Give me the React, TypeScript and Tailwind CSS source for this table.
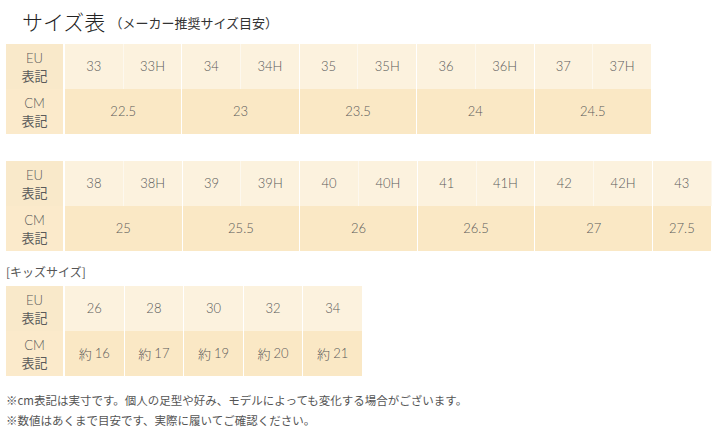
import React from "react";

const jp = { fontFamily: '"Noto Sans CJK JP", sans-serif' };
const num = { fontFamily: 'Lato, "Noto Sans CJK JP", sans-serif' };

function Label({ a, dark }: { a: string; dark?: boolean }) {
  return (
    <div
      className={`w-[59px] shrink-0 h-[45px] flex flex-col items-center justify-center text-[13px] leading-[18px] text-[#5a5a5a] border-r-2 border-white ${dark ? "bg-[#fbeacb]" : "bg-[#f9e9ca]"}`}
      style={num}
    >
      <span className="font-light">{a}</span>
      <span style={jp}>表記</span>
    </div>
  );
}

function SizeTable({ eu, cm, w }: { eu: string[]; cm: { v: string; span: number }[]; w: number }) {
  return (
    <div className="flex flex-col">
      <div className="flex">
        <Label a="EU" />
        {eu.map((e, i) => (
          <div
            key={e}
            className={`h-[45px] flex items-center justify-center text-[13px] font-light text-[#5a5a5a] bg-[#fcf2de] ${i % 2 === 0 ? "border-r border-[#fdf8ee]" : "border-r border-white"}`}
            style={{ ...num, width: w }}
          >
            {e}
          </div>
        ))}
      </div>
      <div className="flex">
        <Label a="CM" dark />
        {cm.map((c) => (
          <div
            key={c.v}
            className="h-[45px] flex items-center justify-center text-[13px] font-light text-[#5a5a5a] bg-[#fae8c5] border-r border-white"
            style={{ ...num, width: w * c.span }}
          >
            {c.v}
          </div>
        ))}
      </div>
    </div>
  );
}

function KidsTable() {
  const eu = ["26", "28", "30", "32", "34"];
  const cm = ["16", "17", "19", "20", "21"];
  return (
    <div className="flex flex-col">
      <div className="flex">
        <Label a="EU" />
        {eu.map((e) => (
          <div key={e} className="w-[59.6px] h-[45px] flex items-center justify-center text-[13px] font-light text-[#5a5a5a] bg-[#fcf2de] border-r border-white" style={num}>
            {e}
          </div>
        ))}
      </div>
      <div className="flex">
        <Label a="CM" dark />
        {cm.map((c) => (
          <div key={c} className="w-[59.6px] h-[45px] flex items-center justify-center text-[13px] font-light text-[#5a5a5a] bg-[#fae8c5] border-r border-white" style={num}>
            <span style={jp}>約</span>
            <span className="ml-[3px]">{c}</span>
          </div>
        ))}
      </div>
    </div>
  );
}

export default function App() {
  const eu1 = ["33", "33H", "34", "34H", "35", "35H", "36", "36H", "37", "37H"];
  const cm1 = ["22.5", "23", "23.5", "24", "24.5"].map((v) => ({ v, span: 2 }));
  const eu2 = ["38", "38H", "39", "39H", "40", "40H", "41", "41H", "42", "42H", "43"];
  const cm2 = [
    { v: "25", span: 2 },
    { v: "25.5", span: 2 },
    { v: "26", span: 2 },
    { v: "26.5", span: 2 },
    { v: "27", span: 2 },
    { v: "27.5", span: 1 },
  ];
  return (
    <div className="w-[720px] h-[440px] bg-white pl-[6px] overflow-hidden" style={jp}>
      <div className="h-[44px] flex items-center pl-[16px] pb-[2px]">
        <span className="text-[21px] font-light text-[#222] leading-none">サイズ表</span>
        <span className="text-[13px] text-[#333] ml-[4px] mt-[3px]">（メーカー推奨サイズ目安）</span>
      </div>
      <SizeTable eu={eu1} cm={cm1} w={58.7} />
      <div className="h-[27px]" />
      <SizeTable eu={eu2} cm={cm2} w={58.8} />
      <div className="h-[35px] flex items-center text-[12px] text-[#555] pt-[6px]">[キッズサイズ]</div>
      <KidsTable />
      <div className="mt-[14px] text-[11.5px] leading-[20px] text-[#555]">
        <div>※cm表記は実寸です。個人の足型や好み、モデルによっても変化する場合がございます。</div>
        <div>※数値はあくまで目安です、実際に履いてご確認ください。</div>
      </div>
    </div>
  );
}
